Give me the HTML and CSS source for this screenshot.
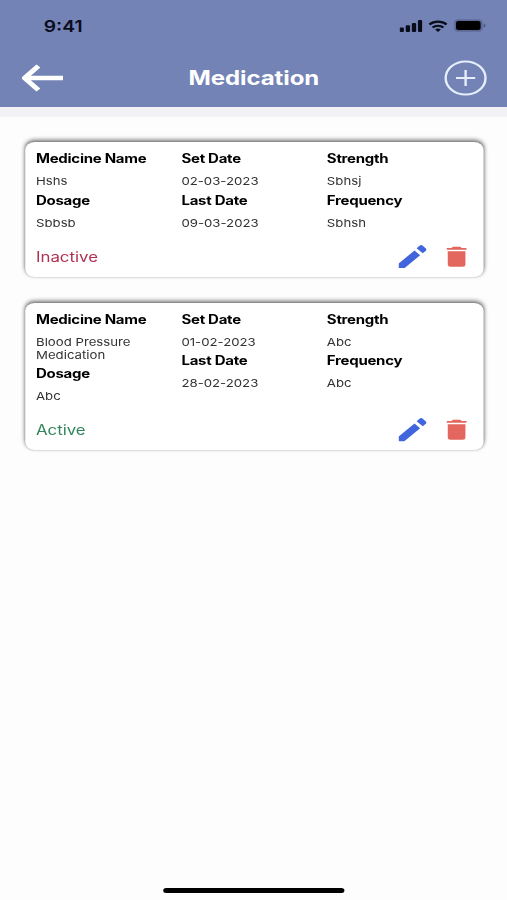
FILE: index.html
```html
<!DOCTYPE html>
<html lang="en">
<head>
<meta charset="utf-8">
<title>Medication</title>
<link rel="stylesheet" href="styles.css">
</head>
<body>
<svg class="defs" width="0" height="0" aria-hidden="true">
  <symbol id="pencil" viewBox="0 0 24 24"><path d="M0 19.2V23q0 1 1 1h3.8L18.5 10.5l-4.8-4.8zM23.4 5.8c.7-.7.7-1.5 0-2.2L20.5.6c-.7-.7-1.6-.7-2.3 0l-2.7 2.7 5.2 5.2z"/></symbol>
  <symbol id="trash" viewBox="0 0 18 22"><path d="M1.2 5.1h15.6v14.1a2.3 2.3 0 0 1-2.3 2.3h-11a2.3 2.3 0 0 1-2.3-2.3zM0 1.7h4.5L5.7.5h6.6l1.2 1.2H18v2H0z"/></symbol>
</svg>
<div class="screen">
  <header class="header">
    <div class="status-bar">
      <span class="time">9:41</span>
      <div class="indicators">
        <svg class="signal" viewBox="0 0 19 12"><rect y="7.5" width="3.6" height="4.5" rx="1"/><rect x="5.1" y="5.3" width="3.6" height="6.7" rx="1"/><rect x="10.2" y="3" width="3.6" height="9" rx="1"/><rect x="15.3" width="3.6" height="12" rx="1"/></svg>
        <svg class="wifi" viewBox="0 0 16 12"><path d="M.8 4.5a10.4 10.4 0 0 1 14.4 0M3.5 7.5a6.5 6.5 0 0 1 9 0" fill="none" stroke="#0a0c1c" stroke-width="2.1"/><path d="M5.6 9.6a3.5 3.5 0 0 1 4.8 0L8 12z"/></svg>
        <svg class="battery" viewBox="0 0 27 13"><rect x=".5" y=".5" width="23.5" height="12" rx="3.5" fill="#5c6796" stroke="#66709f"/><rect x="2" y="2" width="20.5" height="9" rx="2"/><path d="M25 4.2c2.2.8 2.2 3.8 0 4.6z" fill="#4f5a88"/></svg>
      </div>
    </div>
    <div class="nav">
      <svg class="back" viewBox="0 0 35 28"><path d="M34.5 14H3M14 2L2.5 14l11.5 12" fill="none" stroke="#fff" stroke-width="4.5" stroke-linejoin="round"/></svg>
      <h1 class="title">Medication</h1>
      <svg class="add" viewBox="0 0 36 36"><circle cx="18" cy="18" r="16.6" fill="none" stroke="#e6edfb" stroke-width="2"/><path d="M18 10v16M10 18h16" stroke="#e6edfb" stroke-width="2"/></svg>
    </div>
  </header>
  <main class="list">
    <article class="card">
      <div class="fields">
        <dl><dt>Medicine Name</dt><dd>Hshs</dd><dt>Dosage</dt><dd>Sbbsb</dd></dl>
        <dl><dt>Set Date</dt><dd>02-03-2023</dd><dt>Last Date</dt><dd>09-03-2023</dd></dl>
        <dl><dt>Strength</dt><dd>Sbhsj</dd><dt>Frequency</dt><dd>Sbhsh</dd></dl>
      </div>
      <div class="footer">
        <span class="state inactive">Inactive</span>
        <svg class="edit"><use href="#pencil"/></svg>
        <svg class="delete"><use href="#trash"/></svg>
      </div>
    </article>
    <article class="card">
      <div class="fields">
        <dl><dt>Medicine Name</dt><dd>Blood Pressure Medication</dd><dt>Dosage</dt><dd>Abc</dd></dl>
        <dl><dt>Set Date</dt><dd>01-02-2023</dd><dt>Last Date</dt><dd>28-02-2023</dd></dl>
        <dl><dt>Strength</dt><dd>Abc</dd><dt>Frequency</dt><dd>Abc</dd></dl>
      </div>
      <div class="footer">
        <span class="state active">Active</span>
        <svg class="edit"><use href="#pencil"/></svg>
        <svg class="delete"><use href="#trash"/></svg>
      </div>
    </article>
  </main>
  <div class="home-indicator"></div>
</div>
</body>
</html>
```
FILE: styles.css
```css
* { box-sizing: border-box; }
html, body { margin: 0; height: 900px; overflow: hidden; background: #fdfdfd; }
.defs { position: absolute; }
svg { display: block; flex: none; }

.screen {
  width: 422.5px;
  height: 900px;
  display: flex;
  flex-direction: column;
  transform: scaleX(1.2);
  transform-origin: 0 0;
  font-family: Inter, "Liberation Sans", sans-serif;
  color: #000;
}

.header {
  height: 117px;
  flex: none;
  background: #7383b6;
  border-bottom: 10px solid #f2f1f5;
}
.status-bar {
  height: 51px;
  padding: 0 17.5px 0 36.5px;
  display: flex;
  align-items: center;
  justify-content: space-between;
}
.time { font-size: 16px; font-weight: 600; color: #0a0c1c; }
.indicators { display: flex; align-items: center; gap: 5px; fill: #0a0c1c; }
.signal { width: 19px; height: 12px; }
.wifi { width: 16px; height: 12px; }
.battery { width: 27px; height: 13px; fill: #000; }
.nav {
  height: 53px;
  padding: 0 16px 0 17.5px;
  display: flex;
  align-items: center;
  justify-content: space-between;
}
.back { width: 35px; height: 28px; }
.title { margin: 0; font-size: 20px; font-weight: 700; line-height: 26px; letter-spacing: -.07px; color: #fff; }
.add { width: 36px; height: 36px; }

.list {
  flex: 1;
  padding: 25px 20px 0 21px;
  display: flex;
  flex-direction: column;
  gap: 26px;
}
.card {
  padding: 9px 9px 8.4px;
  border-radius: 8px;
  background: #fff;
  box-shadow: 0 -2px 4px rgba(40, 34, 38, .65), 0 0 2px rgba(40, 34, 38, .2);
}
.fields { display: grid; grid-template-columns: repeat(3, 121.2px); }
dl { margin: 0; }
dt { margin-bottom: 8px; font-size: 12.5px; line-height: 16px; font-weight: 700; letter-spacing: -.23px; }
dd { margin: 0 30px 4.8px 0; font-size: 11px; line-height: 12.8px; color: #333; }
dd:last-child { margin-bottom: 0; }
.footer { height: 24px; margin-top: 15px; display: flex; align-items: center; }
.state { flex: 1; font-size: 14px; }
.inactive { color: #b02f52; }
.active { color: #33855b; }
.edit { width: 23.5px; height: 23.5px; fill: #4065dc; }
.delete { width: 17px; height: 21.5px; margin: 0 5px 0 16px; fill: #e4675f; }

.home-indicator {
  width: 151px;
  height: 5px;
  margin: 0 0 7.5px 136px;
  border-radius: 3px;
  background: #000;
}
```
